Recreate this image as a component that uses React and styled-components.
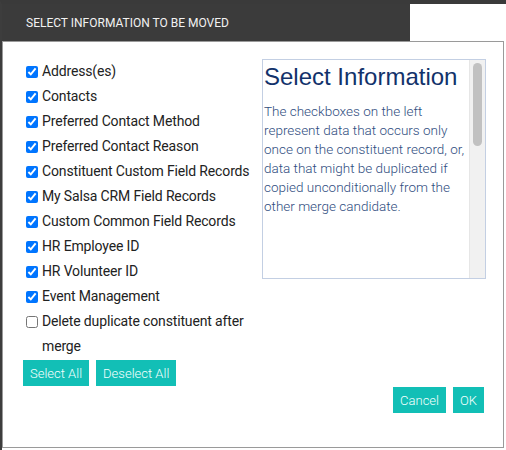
import React, { useState } from "react";
import styled, { createGlobalStyle } from "styled-components";

const GlobalStyle = createGlobalStyle`
  html, body {
    margin: 0;
    padding: 0;
    background: #fff;
  }
  body {
    font-family: Roboto, "Liberation Sans", sans-serif;
  }
`;

const Backdrop = styled.div`
  box-sizing: border-box;
  width: 506px;
  height: 450px;
  border-top: 4px solid #3a3a3a;
  border-left: 2px solid #3d3d3d;
  padding-right: 2px;
  padding-bottom: 2px;
  display: flex;
  flex-direction: column;
`;

const Header = styled.div`
  box-sizing: border-box;
  width: 408px;
  height: 37px;
  background: #3b3b3b;
  color: #f2f2f2;
  font-size: 12px;
  text-transform: uppercase;
  display: flex;
  align-items: center;
  padding-left: 24px;
`;

const Body = styled.div`
  box-sizing: border-box;
  flex: 1;
  border: 1px solid #9a9a9a;
  padding: 17px 17px 0 19px;
  display: flex;
  flex-direction: column;
`;

const Columns = styled.div`
  display: flex;
  justify-content: space-between;
`;

const List = styled.div`
  width: 236px;
  display: flex;
  flex-direction: column;
`;

const Row = styled.label`
  display: flex;
  align-items: flex-start;
  font-size: 14px;
  letter-spacing: -0.15px;
  line-height: 25px;
  color: #222;

  input {
    width: 12px;
    height: 12px;
    margin: 7px 4px 0 4px;
    flex: none;
  }
`;

const Info = styled.div`
  box-sizing: border-box;
  width: 224px;
  height: 220px;
  border: 1px solid #c3cfe3;
  display: flex;
  overflow: hidden;
`;

const InfoText = styled.div`
  flex: 1;
  padding: 0 0 0 1px;
  overflow: hidden;
`;

const Title = styled.h2`
  margin: 3px 0 11px;
  font-family: "Liberation Sans", Arial, sans-serif;
  font-weight: normal;
  font-size: 24px;
  line-height: 28px;
  color: #12326b;
`;

const Para = styled.p`
  margin: 0 0 ${(p) => p.$gap || 0}px;
  font-size: 13.5px;
  line-height: 19px;
  font-weight: 300;
  color: #2f4d80;
`;

const Track = styled.div`
  flex: none;
  width: 15px;
  background: #f1f1f1;
  border-left: 1px solid #e6e6e6;
  padding-top: 3px;
  display: flex;
  justify-content: center;
`;

const Thumb = styled.div`
  width: 9px;
  height: 83px;
  border-radius: 5px;
  background: #c1c1c1;
`;

const ButtonRow = styled.div`
  display: flex;
  gap: 7px;
  justify-content: ${(p) => (p.$end ? "flex-end" : "flex-start")};
  margin-top: ${(p) => p.$top || 0}px;
  padding-left: ${(p) => (p.$end ? 0 : 1)}px;
  padding-right: ${(p) => (p.$end ? 2 : 0)}px;
`;

const Button = styled.button`
  height: 26px;
  padding: 0 7px;
  border: none;
  border-radius: 0;
  background: #12bfb6;
  color: #f4fffe;
  font-family: Roboto, "Liberation Sans", sans-serif;
  font-weight: 300;
  font-size: 13px;
  cursor: pointer;
`;

const items = [
  "Address(es)",
  "Contacts",
  "Preferred Contact Method",
  "Preferred Contact Reason",
  "Constituent Custom Field Records",
  "My Salsa CRM Field Records",
  "Custom Common Field Records",
  "HR Employee ID",
  "HR Volunteer ID",
  "Event Management",
];

export default function App() {
  const [checked, setChecked] = useState(items.map(() => true));
  const [deleteDup, setDeleteDup] = useState(false);

  const toggle = (i) => setChecked((c) => c.map((v, j) => (j === i ? !v : v)));

  return (
    <>
      <GlobalStyle />
      <Backdrop>
        <Header>Select information to be moved</Header>
        <Body>
          <Columns>
            <List>
              {items.map((label, i) => (
                <Row key={label}>
                  <input type="checkbox" checked={checked[i]} onChange={() => toggle(i)} />
                  <span>{label}</span>
                </Row>
              ))}
              <Row>
                <input type="checkbox" checked={deleteDup} onChange={() => setDeleteDup(!deleteDup)} />
                <span>Delete duplicate constituent after merge</span>
              </Row>
            </List>
            <Info>
              <InfoText>
                <Title>Select Information</Title>
                <Para $gap={60}>
                  The checkboxes on the left represent data that occurs only once on the constituent record, or, data
                  that might be duplicated if copied unconditionally from the other merge candidate.
                </Para>
                <Para>
                  Use the checkboxes to select which information should be moved to the surviving record.
                </Para>
              </InfoText>
              <Track>
                <Thumb />
              </Track>
            </Info>
          </Columns>
          <ButtonRow $top={1}>
            <Button onClick={() => setChecked(items.map(() => true))}>Select All</Button>
            <Button onClick={() => setChecked(items.map(() => false))}>Deselect All</Button>
          </ButtonRow>
          <ButtonRow $end $top={1}>
            <Button>Cancel</Button>
            <Button>OK</Button>
          </ButtonRow>
        </Body>
      </Backdrop>
    </>
  );
}
